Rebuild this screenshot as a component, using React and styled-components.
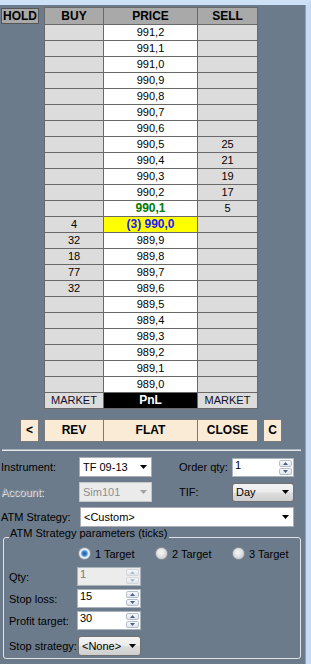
import React from "react";
import styled, { createGlobalStyle, css } from "styled-components";

const GlobalStyle = createGlobalStyle`
  html, body {
    margin: 0;
    padding: 0;
    background: #6c7b8b;
  }
  body {
    font-family: "Liberation Sans", Arial, sans-serif;
    font-size: 11px;
    color: #000;
  }
`;

const Window = styled.div`
  width: 311px;
  height: 664px;
  box-sizing: border-box;
  background: #6c7b8b;
  border-top: 5px solid #cde2f7;
  border-right: 5px solid #c4dbf3;
  box-shadow: inset -1px 0 0 #8da2b8;
  overflow: hidden;
`;

/* ---------- price ladder ---------- */

const Ladder = styled.div`
  display: flex;
  align-items: flex-start;
  padding-top: 2px;
`;

const HoldButton = styled.div`
  box-sizing: border-box;
  width: 38px;
  height: 16px;
  margin: 1px 0 0 1px;
  border: 1px solid #575757;
  background: #a9a9a9;
  font-weight: bold;
  font-size: 12px;
  line-height: 14px;
  text-align: center;
`;

const Book = styled.div`
  display: grid;
  grid-template-columns: 58px 93px 59px;
  grid-template-rows: 16px;
  grid-auto-rows: 15px;
  gap: 1px;
  padding: 1px;
  margin-left: 5px;
  background: #696969;
`;

const cellKinds = {
  head: css`
    background: #a9a9a9;
    font-weight: bold;
    font-size: 12px;
    line-height: 16px;
  `,
  side: css`
    background: #dcdcdc;
  `,
  price: css`
    background: #fff;
  `,
  last: css`
    background: #fff;
    color: #007a00;
    font-weight: bold;
    font-size: 12px;
  `,
  current: css`
    background: #ffff00;
    color: #1a1aff;
    font-weight: bold;
    font-size: 12px;
  `,
  market: css`
    background: #dcdcdc;
    color: #10102a;
  `,
  pnl: css`
    background: #000;
    color: #fff;
    font-weight: bold;
    font-size: 12px;
  `,
};

const Cell = styled.div`
  font-size: 11px;
  line-height: 15px;
  text-align: center;
  white-space: nowrap;
  overflow: hidden;
  ${(p) => cellKinds[p.$kind]}
`;

/* ---------- action buttons ---------- */

const ActionBar = styled.div`
  display: flex;
  align-items: flex-start;
  margin-top: 10px;
`;

const SideButton = styled.div`
  box-sizing: border-box;
  width: 19px;
  height: 23px;
  margin-left: ${(p) => p.$offset}px;
  border: 1px solid #7a7a7a;
  background: #faebd7;
  font-weight: bold;
  font-size: 12px;
  line-height: 21px;
  text-align: center;
`;

const ActionGroup = styled.div`
  display: grid;
  grid-template-columns: 58px 93px 59px;
  grid-auto-rows: 21px;
  gap: 1px;
  padding: 1px;
  margin-left: 5px;
  background: #7a7a7a;
`;

const ActionButton = styled.div`
  background: #faebd7;
  font-weight: bold;
  font-size: 12px;
  line-height: 21px;
  text-align: center;
`;

const Divider = styled.div`
  width: 299px;
  height: 1px;
  margin: 7px 0 0 2px;
  background: #a9b0b8;
  border-bottom: 1px solid #e4e7ea;
`;

/* ---------- order form ---------- */

const Form = styled.div`
  display: flex;
  flex-direction: column;
  gap: 5px;
  margin-top: 6px;
`;

const FormRow = styled.div`
  display: flex;
  align-items: center;
  height: 20px;
`;

const Label = styled.span`
  box-sizing: border-box;
  flex: none;
  width: ${(p) => p.$width}px;
  margin-left: ${(p) => p.$gap || 0}px;
  padding-left: ${(p) => p.$indent || 0}px;
  white-space: nowrap;
  color: ${(p) => (p.$disabled ? "#8e949b" : "#000")};
  text-shadow: ${(p) => (p.$disabled ? "1px 1px 0 #e6e9ec" : "none")};
`;

const comboVariants = {
  field: css`
    background: #fff;
    border: 1px solid #abadb3;
    color: #000;
  `,
  disabled: css`
    background: #ebebeb;
    border: 1px solid #c4c6c9;
    color: #8d8d8d;
  `,
  button: css`
    background: linear-gradient(#f4f4f4 0%, #ebebeb 48%, #dddddd 52%, #cfcfcf 100%);
    border: 1px solid #707070;
    border-radius: 3px;
    color: #000;
  `,
};

const Combo = styled.div`
  box-sizing: border-box;
  flex: none;
  display: flex;
  align-items: center;
  width: ${(p) => p.$width}px;
  height: ${(p) => p.$height || 20}px;
  margin-left: ${(p) => p.$gap || 0}px;
  padding: 0 4px 0 3px;
  ${(p) => comboVariants[p.$variant || "field"]}
`;

const ComboText = styled.span`
  flex: 1;
  white-space: nowrap;
  overflow: hidden;
`;

const Spin = styled.div`
  box-sizing: border-box;
  flex: none;
  display: flex;
  width: ${(p) => p.$width}px;
  height: ${(p) => p.$height || 19}px;
  border: 1px solid #abb3bd;
  background: ${(p) => (p.$disabled ? "#ececec" : "#fff")};
  color: ${(p) => (p.$disabled ? "#7a7a7a" : "#000")};
`;

const SpinValue = styled.span`
  flex: 1;
  padding-left: 2px;
  line-height: 13px;
`;

const SpinArrows = styled.div`
  display: flex;
  flex-direction: column;
  gap: 1px;
  width: 15px;
  padding: 1px;
  box-sizing: border-box;
`;

const SpinArrow = styled.div`
  flex: 1;
  display: flex;
  align-items: center;
  justify-content: center;
  border: 1px solid ${(p) => (p.$disabled ? "#d3d7dc" : "#b5c0cd")};
  border-radius: 2px;
  background: linear-gradient(#f6f8fa, #dfe5ec);
`;

const Arrow = ({ up, color = "#000", w = 7, h = 4 }) => (
  <svg width={w} height={h} viewBox={`0 0 ${w} ${h}`}>
    <polygon
      points={up ? `0,${h} ${w},${h} ${w / 2},0` : `0,0 ${w},0 ${w / 2},${h}`}
      fill={color}
    />
  </svg>
);

/* ---------- ATM group ---------- */

const GroupBox = styled.div`
  position: relative;
  box-sizing: border-box;
  width: 298px;
  height: 122px;
  margin: 10px 0 0 3px;
  padding: 9px 0 0 5px;
  border: 1px solid #dfe3e8;
  border-radius: 3px;
`;

const GroupTitle = styled.span`
  position: absolute;
  top: -11px;
  left: 5px;
  padding: 0 1px;
  background: #6c7b8b;
  line-height: 13px;
  white-space: nowrap;
`;

const RadioRow = styled.div`
  display: grid;
  grid-template-columns: 77px 77px 77px;
  height: 13px;
  margin-left: 69px;
`;

const RadioItem = styled.label`
  display: flex;
  align-items: center;
  gap: 4px;
  white-space: nowrap;
`;

const RadioDot = styled.span`
  box-sizing: border-box;
  flex: none;
  width: 13px;
  height: 13px;
  border-radius: 50%;
  border: 1px solid #8e9196;
  background: ${(p) =>
    p.$checked
      ? "radial-gradient(circle, #1f5fa8 0, #2f79c4 1.8px, #8fc0ec 3.4px, #eef2f6 4.2px, #d4d9df 6px)"
      : "radial-gradient(circle at 45% 40%, #f7f7f7 0, #e6e7e9 3px, #cfd2d6 6px)"};
`;

const FieldRow = styled.div`
  display: flex;
  align-items: center;
  height: ${(p) => p.$height || 19}px;
  margin-top: ${(p) => p.$top || 3}px;
`;

const prices = [];
for (let v = 9912; v >= 9890; v--) prices.push(v);
const fmt = (v) => `${Math.floor(v / 10)},${v % 10}`;

const buys = { 9900: 4, 9899: 32, 9898: 18, 9897: 77, 9896: 32 };
const sells = { 9905: 25, 9904: 21, 9903: 19, 9902: 17, 9901: 5 };
const LAST = 9901;
const CURRENT = 9900;
const POSITION = 3;

const SpinBox = ({ value, width, disabled }) => (
  <Spin $width={width} $disabled={disabled}>
    <SpinValue>{value}</SpinValue>
    <SpinArrows>
      <SpinArrow $disabled={disabled}>
        <Arrow up w={5} h={3} color={disabled ? "#b3bcc6" : "#4e6082"} />
      </SpinArrow>
      <SpinArrow $disabled={disabled}>
        <Arrow w={5} h={3} color={disabled ? "#b3bcc6" : "#4e6082"} />
      </SpinArrow>
    </SpinArrows>
  </Spin>
);

const App = () => {
  return (
    <>
      <GlobalStyle />
      <Window>
        <Ladder>
          <HoldButton>HOLD</HoldButton>
          <Book>
            <Cell $kind="head">BUY</Cell>
            <Cell $kind="head">PRICE</Cell>
            <Cell $kind="head">SELL</Cell>
            {prices.map((v) => {
              const kind = v === CURRENT ? "current" : v === LAST ? "last" : "price";
              return (
                <React.Fragment key={v}>
                  <Cell $kind="side">{buys[v] ?? ""}</Cell>
                  <Cell $kind={kind}>
                    {v === CURRENT ? `(${POSITION}) ${fmt(v)}` : fmt(v)}
                  </Cell>
                  <Cell $kind="side">{sells[v] ?? ""}</Cell>
                </React.Fragment>
              );
            })}
            <Cell $kind="market">MARKET</Cell>
            <Cell $kind="pnl">PnL</Cell>
            <Cell $kind="market">MARKET</Cell>
          </Book>
        </Ladder>

        <ActionBar>
          <SideButton $offset={20}>&lt;</SideButton>
          <ActionGroup>
            <ActionButton>REV</ActionButton>
            <ActionButton>FLAT</ActionButton>
            <ActionButton>CLOSE</ActionButton>
          </ActionGroup>
          <SideButton $offset={5}>C</SideButton>
        </ActionBar>

        <Divider />

        <Form>
          <FormRow>
            <Label $width={79} $indent={1}>Instrument:</Label>
            <Combo $width={73}>
              <ComboText>TF 09-13</ComboText>
              <Arrow />
            </Combo>
            <Label $width={53} $gap={27}>Order qty:</Label>
            <SpinBox value="1" width={62} />
          </FormRow>
          <FormRow>
            <Label $width={79} $indent={1} $disabled>Account:</Label>
            <Combo $width={73} $variant="disabled">
              <ComboText>Sim101</ComboText>
              <Arrow color="#a2a2a2" />
            </Combo>
            <Label $width={53} $gap={27}>TIF:</Label>
            <Combo $width={62} $height={19} $variant="button">
              <ComboText>Day</ComboText>
              <Arrow />
            </Combo>
          </FormRow>
          <FormRow>
            <Label $width={80} $indent={1}>ATM Strategy:</Label>
            <Combo $width={214}>
              <ComboText>&lt;Custom&gt;</ComboText>
              <Arrow />
            </Combo>
          </FormRow>
        </Form>

        <GroupBox>
          <GroupTitle>ATM Strategy parameters (ticks)</GroupTitle>
          <RadioRow>
            <RadioItem><RadioDot $checked />1 Target</RadioItem>
            <RadioItem><RadioDot />2 Target</RadioItem>
            <RadioItem><RadioDot />3 Target</RadioItem>
          </RadioRow>
          <FieldRow $top={7}>
            <Label $width={68}>Qty:</Label>
            <SpinBox value="1" width={64} disabled />
          </FieldRow>
          <FieldRow>
            <Label $width={68}>Stop loss:</Label>
            <SpinBox value="15" width={64} />
          </FieldRow>
          <FieldRow>
            <Label $width={68}>Profit target:</Label>
            <SpinBox value="30" width={64} />
          </FieldRow>
          <FieldRow $top={6} $height={20}>
            <Label $width={69}>Stop strategy:</Label>
            <Combo $width={63} $variant="button">
              <ComboText>&lt;None&gt;</ComboText>
              <Arrow />
            </Combo>
          </FieldRow>
        </GroupBox>
      </Window>
    </>
  );
};

export default App;
